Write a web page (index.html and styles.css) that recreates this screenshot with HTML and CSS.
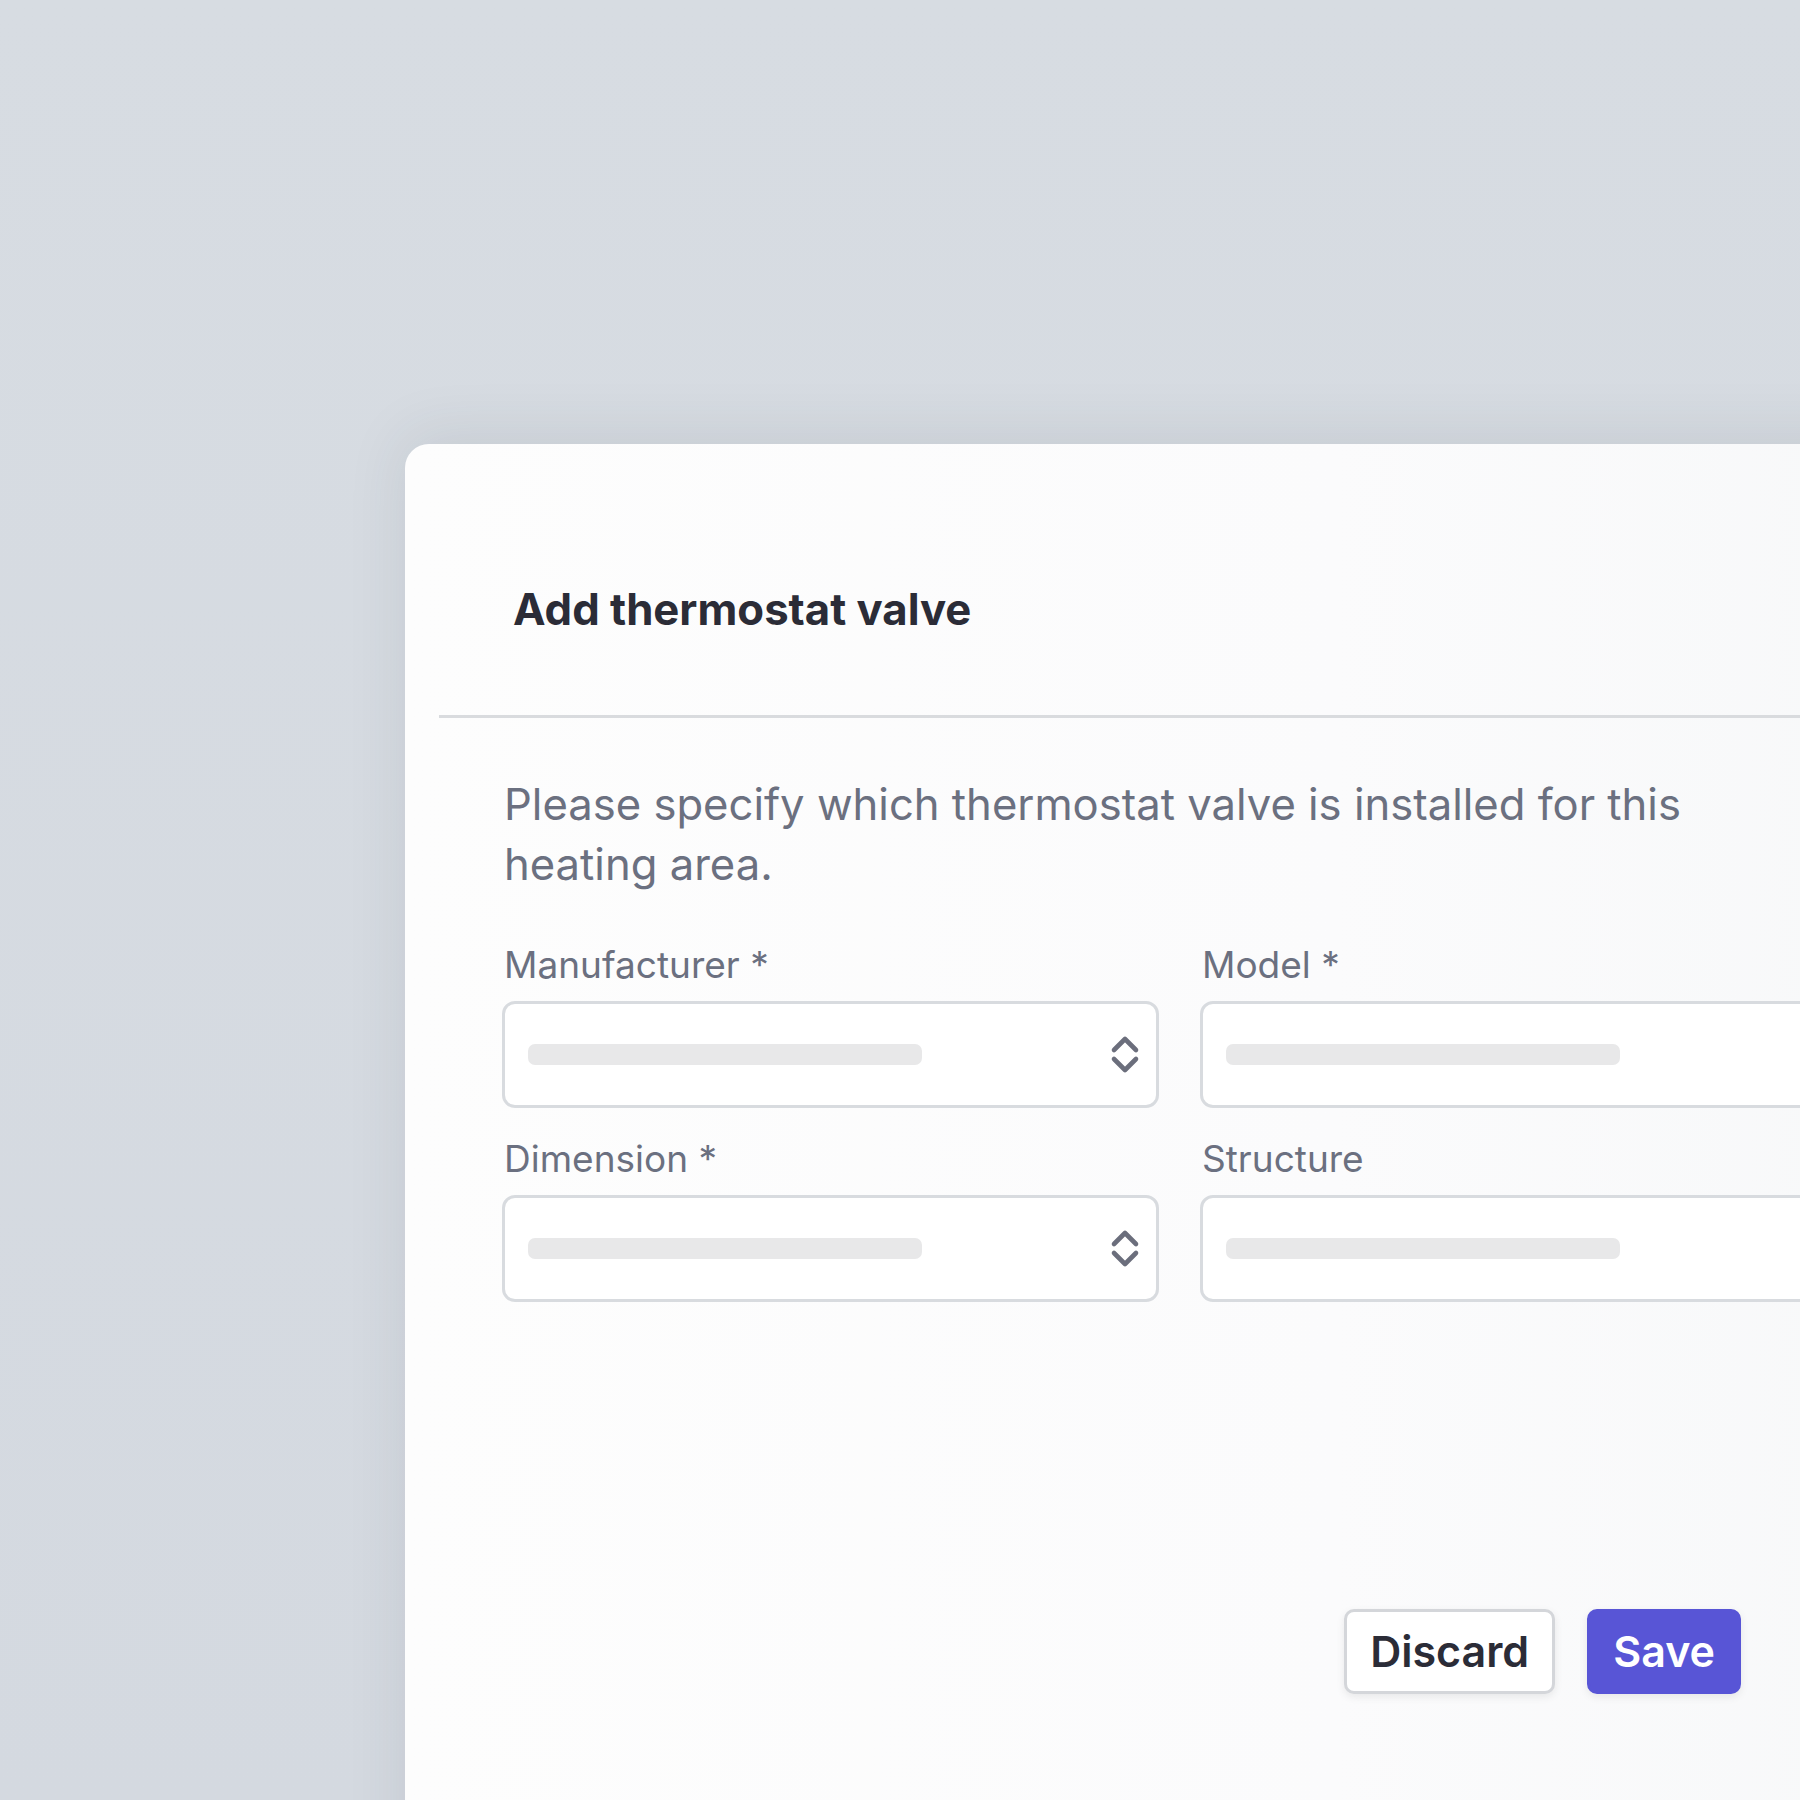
FILE: index.html
```html
<!DOCTYPE html>
<html lang="en">
<head>
<meta charset="utf-8">
<title>Add thermostat valve</title>
<link rel="stylesheet" href="styles.css">
</head>
<body>
<div class="stage">
  <div class="card">
    <div class="card-header">
      <h1 class="title">Add thermostat valve</h1>
    </div>
    <div class="divider"></div>
    <div class="card-body">
      <p class="intro">Please specify which thermostat valve is installed for this heating area.</p>
      <div class="fields">
        <div class="field">
          <label class="label">Manufacturer *</label>
          <div class="input select">
            <span class="placeholder"></span>
            <svg class="chevrons" viewBox="0 0 30 44" width="30" height="44" aria-hidden="true">
              <polyline points="4,18 15,7 26,18" fill="none" stroke="#6b6e7c" stroke-width="4.6" stroke-linecap="round" stroke-linejoin="round"/>
              <polyline points="4,27 15,38 26,27" fill="none" stroke="#6b6e7c" stroke-width="4.6" stroke-linecap="round" stroke-linejoin="round"/>
            </svg>
          </div>
        </div>
        <div class="field">
          <label class="label">Model *</label>
          <div class="input">
            <span class="placeholder"></span>
          </div>
        </div>
        <div class="field">
          <label class="label">Dimension *</label>
          <div class="input select">
            <span class="placeholder"></span>
            <svg class="chevrons" viewBox="0 0 30 44" width="30" height="44" aria-hidden="true">
              <polyline points="4,18 15,7 26,18" fill="none" stroke="#6b6e7c" stroke-width="4.6" stroke-linecap="round" stroke-linejoin="round"/>
              <polyline points="4,27 15,38 26,27" fill="none" stroke="#6b6e7c" stroke-width="4.6" stroke-linecap="round" stroke-linejoin="round"/>
            </svg>
          </div>
        </div>
        <div class="field">
          <label class="label">Structure</label>
          <div class="input">
            <span class="placeholder"></span>
          </div>
        </div>
      </div>
    </div>
    <div class="card-footer">
      <button class="btn btn-secondary" type="button">Discard</button>
      <button class="btn btn-primary" type="button">Save</button>
    </div>
  </div>
</div>
</body>
</html>
```

FILE: styles.css
```css
html, body {
  margin: 0;
  padding: 0;
}

body {
  width: 1800px;
  height: 1800px;
  overflow: hidden;
  background: linear-gradient(to bottom, #d7dce2 0%, #d4d9e0 100%);
  font-family: Inter, "Noto Sans", "Liberation Sans", sans-serif;
}

.stage {
  padding: 444px 0 0 405px;
}

.card {
  width: 1549px;
  height: 1500px;
  box-sizing: border-box;
  background: linear-gradient(to right, #fdfdfd 0%, #fbfbfc 60%, #f7f8f9 100%);
  border-radius: 24px 24px 0 0;
  box-shadow: 0 -8px 60px rgba(50, 60, 70, 0.10);
}

.card-header {
  padding: 144px 0 83px 108px;
}

.title {
  margin: 0;
  font-size: 43.7px;
  line-height: 44px;
  font-weight: 700;
  color: #2b2c37;
}

.divider {
  margin-left: 34px;
  height: 3px;
  background: #d9dbde;
}

.card-body {
  padding: 57px 97px 0 97px;
}

.intro {
  margin: 0 0 0 2px;
  max-width: 1260px;
  font-size: 43.6px;
  line-height: 60px;
  color: #6b7080;
}

.fields {
  margin-top: 41.5px;
  display: grid;
  grid-template-columns: 657px 657px;
  column-gap: 41px;
  row-gap: 23px;
}

.field {
  display: flex;
  flex-direction: column;
}

.label {
  font-size: 37px;
  line-height: 55px;
  color: #6b7080;
  margin: 0 0 9px 2px;
}

.input {
  height: 107px;
  box-sizing: border-box;
  border: 3px solid #d8dbdf;
  border-radius: 13px;
  background: #ffffff;
  display: flex;
  align-items: center;
  justify-content: space-between;
  padding: 0 16px 0 23px;
}

.placeholder {
  display: block;
  width: 394px;
  height: 21px;
  border-radius: 7px;
  background: #e8e8e9;
}

.chevrons {
  display: block;
  flex: none;
}

.card-footer {
  margin-top: 307px;
  display: flex;
  justify-content: flex-end;
  gap: 32px;
  padding-right: 213px;
}

.btn {
  height: 85px;
  box-sizing: border-box;
  border-radius: 10px;
  padding: 0 23px;
  font-family: Inter, "Noto Sans", "Liberation Sans", sans-serif;
  font-size: 43px;
  font-weight: 600;
  line-height: 1;
  display: flex;
  align-items: center;
  cursor: pointer;
}

.btn-secondary {
  background: #ffffff;
  color: #2b2c37;
  border: 3px solid #d4d6da;
  box-shadow: 0 3px 8px rgba(0, 0, 0, 0.08);
}

.btn-primary {
  background: #5855d6;
  color: #ffffff;
  border: 3px solid #5855d6;
  box-shadow: 0 3px 8px rgba(0, 0, 0, 0.08);
}
```
